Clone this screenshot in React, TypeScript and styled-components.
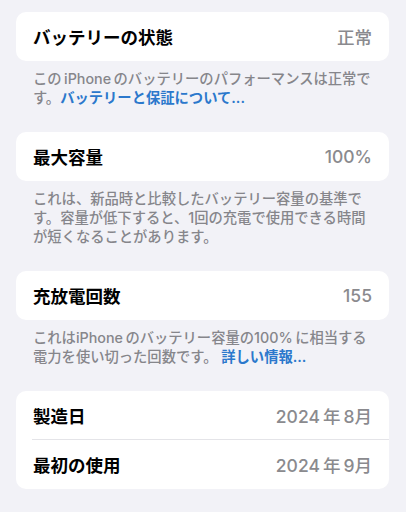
import React from 'react';
import styled, { createGlobalStyle } from 'styled-components';

const GlobalStyle = createGlobalStyle`
  html, body {
    margin: 0;
    padding: 0;
    background: #f2f2f7;
  }
  body {
    font-family: Inter, "Noto Sans CJK JP", sans-serif;
    -webkit-font-smoothing: antialiased;
  }
`;

const Page = styled.div`
  width: 406px;
  min-height: 512px;
  box-sizing: border-box;
  padding: 12px 17px 0 16px;
  background: #f2f2f7;
`;

const Card = styled.div`
  background: #ffffff;
  border-radius: 10px;
  overflow: hidden;
`;

const Row = styled.div<{ $divider?: boolean }>`
  display: flex;
  align-items: center;
  justify-content: space-between;
  height: 49px;
  padding: 0 17px;
  position: relative;

  ${(p) =>
    p.$divider &&
    `
    &::after {
      content: '';
      position: absolute;
      left: 16px;
      right: 0;
      bottom: 0;
      height: 1px;
      background: #e4e4e8;
    }
  `}
`;

const Label = styled.span`
  font-size: 17.5px;
  font-weight: 600;
  color: #000;
`;

const Value = styled.span`
  font-size: 17.5px;
  font-weight: 500;
  color: #8a8a8e;
`;

const Footer = styled.p`
  margin: 0;
  padding: 8px 17px 25px;
  font-size: 14.3px;
  line-height: 19px;
  color: #86868b;
  font-weight: 500;
`;

const Link = styled.span`
  color: #2b78cc;
  font-weight: 600;
`;

export default function App() {
  return (
    <>
      <GlobalStyle />
      <Page>
        <Card>
          <Row>
            <Label>バッテリーの状態</Label>
            <Value>正常</Value>
          </Row>
        </Card>
        <Footer>
          この{'\u2009'}iPhone{'\u2009'}のバッテリーのパフォーマンスは正常です。<Link>バッテリーと保証について...</Link>
        </Footer>

        <Card>
          <Row>
            <Label>最大容量</Label>
            <Value>100%</Value>
          </Row>
        </Card>
        <Footer>
          これは、新品時と比較したバッテリー容量の基準です。容量が低下すると、1回の充電で使用できる時間が短くなることがあります。
        </Footer>

        <Card>
          <Row>
            <Label>充放電回数</Label>
            <Value>155</Value>
          </Row>
        </Card>
        <Footer>
          これはiPhone{'\u2009'}のバッテリー容量の100%{'\u2009'}に相当する電力を使い切った回数です。 <Link>詳しい情報...</Link>
        </Footer>

        <Card>
          <Row $divider>
            <Label>製造日</Label>
            <Value>2024{'\u2009'}年{'\u2009'}8月</Value>
          </Row>
          <Row>
            <Label>最初の使用</Label>
            <Value>2024{'\u2009'}年{'\u2009'}9月</Value>
          </Row>
        </Card>
      </Page>
    </>
  );
}
